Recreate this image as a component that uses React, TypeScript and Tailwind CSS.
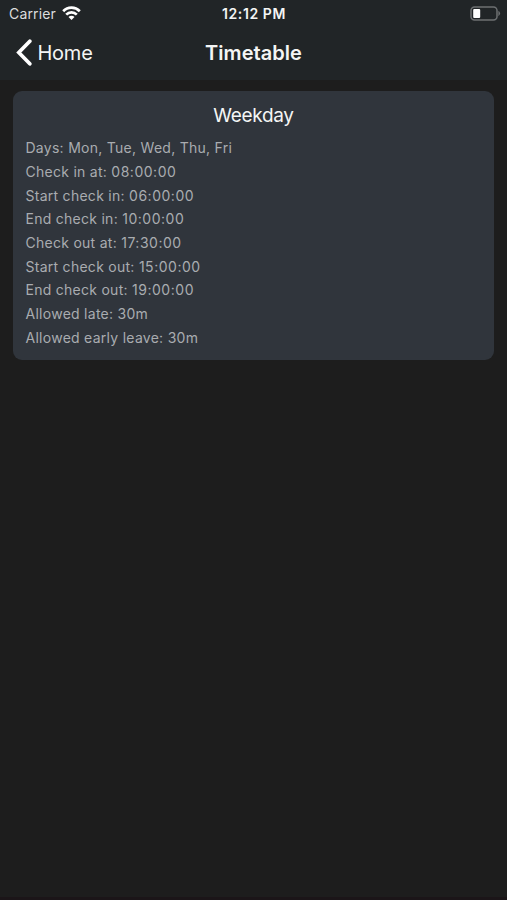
const rows: [string, string][] = [
  ["Days:", "Mon, Tue, Wed, Thu, Fri"],
  ["Check in at:", "08:00:00"],
  ["Start check in:", "06:00:00"],
  ["End check in:", "10:00:00"],
  ["Check out at:", "17:30:00"],
  ["Start check out:", "15:00:00"],
  ["End check out:", "19:00:00"],
  ["Allowed late:", "30m"],
  ["Allowed early leave:", "30m"],
];

function Wifi() {
  return (
    <svg width="19" height="14" viewBox="0 0 19 14" fill="none" stroke="white" strokeWidth="2.7">
      <path d="M1.2 5.2a11.6 11.6 0 0 1 16.6 0M4.2 8.6a7.5 7.5 0 0 1 10.6 0" />
      <path d="M6.5 11a4.2 4.2 0 0 1 6 0l-3 3z" fill="white" stroke="none" />
    </svg>
  );
}

function Battery() {
  return (
    <svg className="justify-self-end" width="31" height="15" viewBox="0 0 31 15">
      <rect x="1" y="1" width="26" height="13" rx="3.5" fill="none" stroke="#6d7072" strokeWidth="1.5" />
      <rect x="3.2" y="3" width="7" height="9" rx="1" fill="white" />
      <path d="M28.4 4.8q3.4 2.7 0 5.4z" fill="#6d7072" />
    </svg>
  );
}

export default function App() {
  return (
    <div className="flex h-[900px] w-[507px] flex-col overflow-hidden bg-[#1d1d1d] font-['Inter',sans-serif] text-[#f4f5f5]">
      <header className="h-20 shrink-0 bg-[#212527]">
        <div className="grid h-[26px] grid-cols-3 items-center pl-[9px] pr-[6px] text-[14px]">
          <div className="flex items-center gap-[6px]">
            <span className="tracking-[0.15px] text-[#dcdddd]">Carrier</span>
            <Wifi />
          </div>
          <span className="-ml-[2px] text-center font-semibold tracking-[0.6px]">12:12 PM</span>
          <Battery />
        </div>
        <div className="grid h-[53px] grid-cols-3 items-center px-4">
          <div className="flex items-center gap-[5.5px] text-[20px]">
            <svg width="16" height="27" viewBox="0 0 16 27" fill="none" stroke="white" strokeWidth="3.7" strokeLinecap="round">
              <path d="M13.8 2.2 2.8 13.5l11 11.3" />
            </svg>
            <span className="tracking-[-0.25px]">Home</span>
          </div>
          <h1 className="text-center text-[20px] font-semibold tracking-[0.05px]">Timetable</h1>
        </div>
      </header>
      <main className="mx-[13px] mt-[11px] h-[269px] rounded-[9px] bg-[#30353c] px-[12.5px] pt-[11px]">
        <h2 className="text-center text-[19px] leading-7 tracking-[-0.3px]">Weekday</h2>
        <div className="mt-[6.4px] text-[14px] leading-[23.65px] tracking-[0.27px] text-[#a9acb0]">
          {rows.map(([label, value]) => (
            <p key={label}>
              {label} <span className={/^\d\d:/.test(value) ? "tracking-[0.52px]" : ""}>{value}</span>
            </p>
          ))}
        </div>
      </main>
      <footer className="mt-auto h-[3px] bg-[#1b1518]" />
    </div>
  );
}
